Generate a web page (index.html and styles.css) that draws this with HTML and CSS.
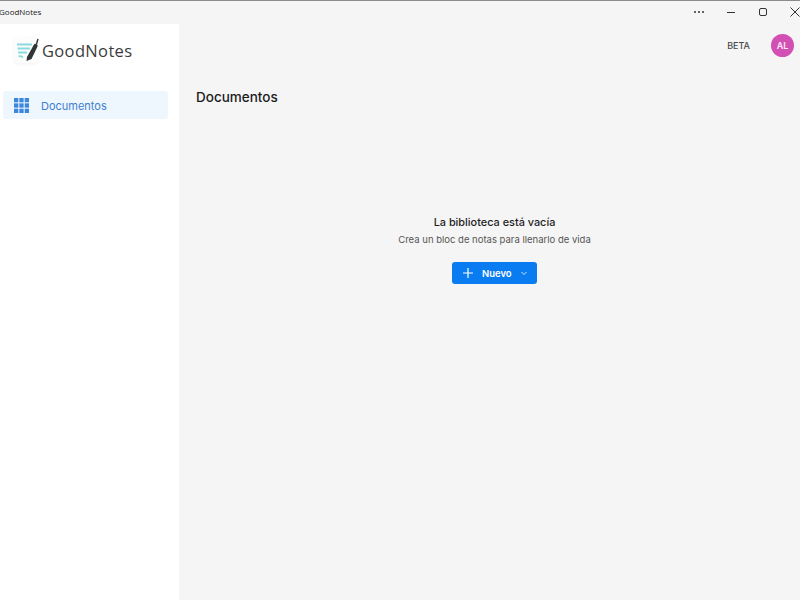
FILE: index.html
```html
<!DOCTYPE html>
<html lang="es">
<head>
<meta charset="utf-8">
<title>GoodNotes</title>
<link rel="stylesheet" href="styles.css">
</head>
<body>
<div class="app">
  <header class="titlebar">
    <span class="app-title">GoodNotes</span>
    <div class="win-controls">
      <svg class="win-icon" viewBox="0 0 14 14"><g fill="#333"><circle cx="3" cy="7" r="1"/><circle cx="7" cy="7" r="1"/><circle cx="11" cy="7" r="1"/></g></svg>
      <svg class="win-icon" viewBox="0 0 14 14"><path d="M3 7.500h8" stroke="#333" fill="none"/></svg>
      <svg class="win-icon" viewBox="0 0 14 14"><rect x="3.500" y="3.500" width="7" height="7" rx="1.500" stroke="#333" fill="none"/></svg>
      <svg class="win-icon" viewBox="0 0 14 14"><path d="M2.500 2.500l9 9M11.500 2.500l-9 9" stroke="#333" fill="none"/></svg>
    </div>
  </header>
  <div class="body">
    <aside class="sidebar">
      <div class="brand">
        <div class="logo-tile">
          <svg class="logo" viewBox="0 0 24 24">
            <g stroke="#8adbe0" stroke-width="2" fill="none">
              <path d="M2 6.500h15"/><path d="M2.500 10.500h12.500"/><path d="M3 14.500h9"/><path d="M3.500 18.500c2-1.200 3 .8 4.500 0"/>
            </g>
            <path d="M12 19l7-12.500c1-1.700 4.500.2 3.500 2L16.500 21l-5 2z" fill="#2f3437"/>
            <path d="M21.500 6l1.500-5" stroke="#2f3437" stroke-width="1.400" fill="none"/>
          </svg>
        </div>
        <span class="brand-name">GoodNotes</span>
      </div>
      <nav class="nav">
        <a class="nav-item">
          <svg class="nav-icon" viewBox="0 0 15 15"><g fill="#3d87dc">
            <rect x="0" y="0" width="4.300" height="4.300"/><rect x="5.350" y="0" width="4.300" height="4.300"/><rect x="10.700" y="0" width="4.300" height="4.300"/>
            <rect x="0" y="5.350" width="4.300" height="4.300"/><rect x="5.350" y="5.350" width="4.300" height="4.300"/><rect x="10.700" y="5.350" width="4.300" height="4.300"/>
            <rect x="0" y="10.700" width="4.300" height="4.300"/><rect x="5.350" y="10.700" width="4.300" height="4.300"/><rect x="10.700" y="10.700" width="4.300" height="4.300"/>
          </g></svg>
          <span class="nav-label">Documentos</span>
        </a>
      </nav>
    </aside>
    <main class="main">
      <div class="topbar">
        <span class="beta">BETA</span>
        <span class="avatar">AL</span>
      </div>
      <h1 class="page-title">Documentos</h1>
      <section class="empty">
        <h2 class="empty-title">La biblioteca está vacía</h2>
        <p class="empty-text">Crea un bloc de notas para llenarlo de vida</p>
        <button class="new-btn">
          <svg class="plus" viewBox="0 0 12 12"><path d="M6 1v10M1 6h10" stroke="#fff" stroke-width="1.200" fill="none"/></svg>
          <span>Nuevo</span>
          <svg class="chev" viewBox="0 0 8 8"><path d="M1.500 3l2.500 2.500L6.500 3" stroke="#cfe4ff" fill="none"/></svg>
        </button>
      </section>
    </main>
  </div>
</div>
</body>
</html>
```
FILE: styles.css
```css
* { box-sizing: border-box; }
html, body { margin: 0; height: 100%; }
body { font-family: Inter, "Liberation Sans", sans-serif; background: #f5f5f5; color: #1c1c1c; overflow: hidden; }
.app { width: 800px; height: 600px; display: flex; flex-direction: column; border-top: 1px solid #8c8c8c; }
.titlebar { height: 23px; flex: none; display: flex; align-items: center; justify-content: space-between; }
.app-title { font-family: "Open Sans", sans-serif; font-size: 8px; color: #222; margin: -2px 0 0 -1px; }
.win-controls { display: flex; gap: 18px; margin-right: -2px; margin-top: -1px; }
.win-icon { width: 14px; height: 14px; display: block; }
.body { flex: 1; display: flex; min-height: 0; }
.sidebar { width: 179px; flex: none; background: #fff; display: flex; flex-direction: column; }
.brand { height: 56px; display: flex; align-items: center; padding: 0 0 4px 14px; gap: 3px; }
.logo-tile { width: 25px; height: 26px; display: flex; align-items: center; justify-content: center; background: #fcfcfc; border-radius: 4px; box-shadow: 0 1px 3px rgba(0,0,0,.06); }
.logo { width: 24px; height: 24px; display: block; }
.brand-name { font-family: "Open Sans", sans-serif; font-size: 16.5px; letter-spacing: .35px; color: #3c3c3c; }
.nav { padding: 11px 11px 0 3px; }
.nav-item { height: 28px; display: flex; align-items: center; gap: 12px; padding-left: 11px; background: #eef6fe; border-radius: 3px; color: #3f7fd1; font-size: 11px; font-weight: 400; }
.nav-label { padding-top: 1px; }
.nav-icon { width: 15px; height: 15px; display: block; }
.main { flex: 1; display: flex; flex-direction: column; padding: 0 6px 0 17px; min-width: 0; }
.topbar { height: 42px; display: flex; align-items: center; justify-content: flex-end; gap: 21px; }
.beta { font-size: 9px; font-weight: 500; color: #4a4a4a; }
.avatar { width: 23px; height: 23px; border-radius: 50%; background: #d24fb4; color: #fde9f7; font-size: 9px; font-weight: 600; display: flex; align-items: center; justify-content: center; }
.page-title { margin: 21px 0 0; font-size: 13.5px; font-weight: 500; line-height: 20px; color: #1c1c1c; }
.empty { margin-top: 107px; margin-right: 1px; display: flex; flex-direction: column; align-items: center; }
.empty-title { margin: 0; font-size: 10.9px; font-weight: 500; line-height: 16px; color: #1e1e1e; }
.empty-text { margin: 3px 0 0; font-size: 9.5px; line-height: 14px; color: #555; }
.new-btn { margin-top: 15px; width: 85px; height: 22px; border: 0; border-radius: 3px; background: #0a7cf2; color: #fff; font-family: inherit; font-size: 9.5px; font-weight: 600; display: flex; align-items: center; padding: 0 0 0 10px; gap: 0; }
.plus { width: 12px; height: 12px; display: block; margin-right: 8px; }
.chev { width: 8px; height: 8px; display: block; margin-left: 8px; }
```
